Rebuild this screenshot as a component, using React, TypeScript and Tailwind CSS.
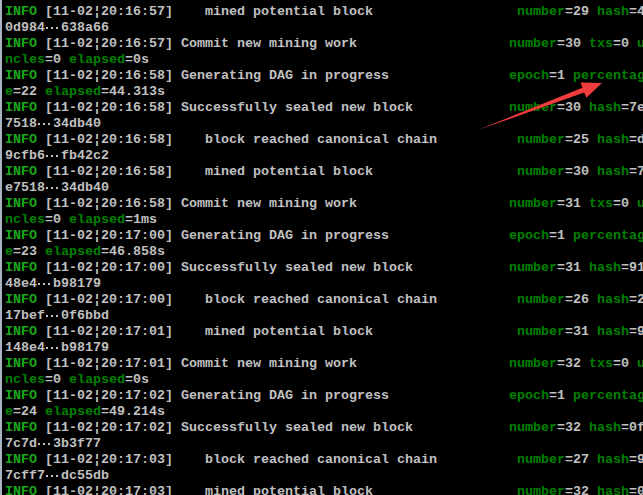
type Seg = [string, string]

const W = "#c0c0c0"
const G = "#008000"
const I = "#1aa81a"
const ELL = "ell"

// header part of a log line: "INFO [date|time] message" padded up to the key column
function head(time: string, msg: string, col: number): Seg[] {
  return [
    ["INFO", I],
    [` [11-02¦${time}] ` + msg.padEnd(col - 22), W],
  ]
}

function kv(k: string, v: string, last = false): Seg[] {
  return [
    [k, G],
    ["=" + v + (last ? "" : " "), W],
  ]
}

function hash(a: string, b: string): Seg[] {
  return [
    [a, W],
    ["", ELL],
    [b, W],
  ]
}

const MINED = "   mined potential block"
const CANON = "   block reached canonical chain"
const COMMIT = "Commit new mining work"
const DAG = "Generating DAG in progress"
const SEALED = "Successfully sealed new block"

const rows: Seg[][] = [
  [...head("20:16:57", MINED, 64), ...kv("number", "29"), ...kv("hash", "4", true)],
  hash("0d984", "638a66"),
  [...head("20:16:57", COMMIT, 63), ...kv("number", "30"), ...kv("txs", "0"), ["u", G]],
  [["ncles", G], ["=0 ", W], ...kv("elapsed", "0s", true)],
  [...head("20:16:58", DAG, 63), ...kv("epoch", "1"), ["percentag", G]],
  [["e", G], ["=22 ", W], ...kv("elapsed", "44.313s", true)],
  [...head("20:16:58", SEALED, 63), ...kv("number", "30"), ...kv("hash", "7e", true)],
  hash("7518", "34db40"),
  [...head("20:16:58", CANON, 64), ...kv("number", "25"), ...kv("hash", "d", true)],
  hash("9cfb6", "fb42c2"),
  [...head("20:16:58", MINED, 64), ...kv("number", "30"), ...kv("hash", "7", true)],
  hash("e7518", "34db40"),
  [...head("20:16:58", COMMIT, 63), ...kv("number", "31"), ...kv("txs", "0"), ["u", G]],
  [["ncles", G], ["=0 ", W], ...kv("elapsed", "1ms", true)],
  [...head("20:17:00", DAG, 63), ...kv("epoch", "1"), ["percentag", G]],
  [["e", G], ["=23 ", W], ...kv("elapsed", "46.858s", true)],
  [...head("20:17:00", SEALED, 63), ...kv("number", "31"), ...kv("hash", "91", true)],
  hash("48e4", "b98179"),
  [...head("20:17:00", CANON, 64), ...kv("number", "26"), ...kv("hash", "2", true)],
  hash("17bef", "0f6bbd"),
  [...head("20:17:01", MINED, 64), ...kv("number", "31"), ...kv("hash", "9", true)],
  hash("148e4", "b98179"),
  [...head("20:17:01", COMMIT, 63), ...kv("number", "32"), ...kv("txs", "0"), ["u", G]],
  [["ncles", G], ["=0 ", W], ...kv("elapsed", "0s", true)],
  [...head("20:17:02", DAG, 63), ...kv("epoch", "1"), ["percentag", G]],
  [["e", G], ["=24 ", W], ...kv("elapsed", "49.214s", true)],
  [...head("20:17:02", SEALED, 63), ...kv("number", "32"), ...kv("hash", "0f", true)],
  hash("7c7d", "3b3f77"),
  [...head("20:17:03", CANON, 64), ...kv("number", "27"), ...kv("hash", "9", true)],
  hash("7cff7", "dc55db"),
  [...head("20:17:03", MINED, 64), ...kv("number", "32"), ...kv("hash", "0", true)],
]

// the console draws "…" as two cells of dots
function Dots() {
  return (
    <span className="relative inline-block w-[16px] h-[16px] align-top">
      <span className="absolute top-[7px] left-[1px] w-[2px] h-[2px] bg-[#c0c0c0]" />
      <span className="absolute top-[7px] left-[6px] w-[2px] h-[2px] bg-[#c0c0c0]" />
      <span className="absolute top-[7px] left-[11px] w-[2px] h-[2px] bg-[#c0c0c0]" />
    </span>
  )
}

function Arrow() {
  return (
    <svg className="absolute left-0 top-0 pointer-events-none" width="643" height="495">
      <polygon
        points="476,130 580.4,87.8 578.5,82.4 600,83 584.3,97.8 582.2,92.4"
        fill="#f03c3c"
      />
    </svg>
  )
}

export default function App() {
  return (
    <div className="relative w-[643px] h-[495px] overflow-hidden bg-black border-l-2 border-[#a9b4c2]">
      <div
        className="pl-[3px] pt-[4px] font-bold text-[13.333px] leading-[16px] whitespace-pre"
        style={{ fontFamily: '"Liberation Mono", "DejaVu Sans Mono", monospace' }}
      >
        {rows.map((row, i) => (
          <div key={i} className="h-[16px]">
            {row.map(([text, color], j) =>
              color === ELL ? (
                <Dots key={j} />
              ) : (
                <span key={j} style={{ color }}>
                  {text}
                </span>
              )
            )}
          </div>
        ))}
      </div>
      <Arrow />
    </div>
  )
}
